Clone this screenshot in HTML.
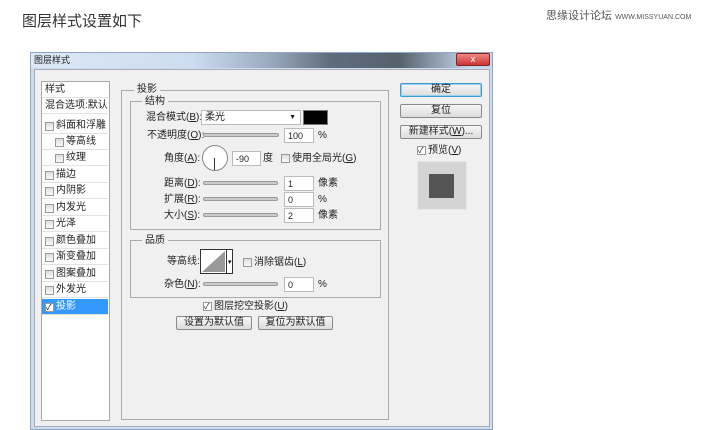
<!DOCTYPE html>
<html><head><meta charset="utf-8"><style>
*{margin:0;padding:0;box-sizing:border-box}
body{width:720px;height:430px;background:#fff;position:relative;overflow:hidden;font-family:"Liberation Sans","Noto Sans CJK SC",sans-serif;font-size:10px;color:#222}
.a{position:absolute;white-space:nowrap;line-height:13px}
.cb{position:absolute;width:9px;height:9px;border:1px solid #999;background:linear-gradient(#ddd,#fafafa)}
.in{position:absolute;height:15px;background:#fff;border:1px solid #bbb;font-size:9px;padding:1px 3px;line-height:12px}
.sl{position:absolute;height:4px;border:1px solid #999;background:#ccc;border-radius:2px}
.btn{position:absolute;height:14px;border:1px solid #8a8a8a;border-radius:2px;background:linear-gradient(#f6f6f6,#dcdcdc);text-align:center;font-size:10px;line-height:12px}
.li{position:absolute;left:42px;width:66px;height:16px;font-size:10px;line-height:16px;padding-left:14px;border-bottom:1px solid #e2e2e2}
</style></head><body>
<div class="a" style="left:22px;top:13px;font-size:15px;line-height:18px;color:#333">图层样式设置如下</div>
<div class="a" style="left:546px;top:10px;font-size:11px;color:#555">思缘设计论坛 <span style="font-size:7px">WWW.MISSYUAN.COM</span></div>
<div class="a" style="left:30px;top:52px;width:463px;height:378px;background:#cddcee;border:1px solid #8fa7c2"></div>
<div class="a" style="left:31px;top:53px;width:461px;height:15px;background:linear-gradient(90deg,#dce8f5 0%,#cddcf0 35%,#9aaabe 52%,#5f6c7c 65%,#56616e 80%,#c4d6ea 95%)"></div>
<div class="a" style="left:34px;top:54px;font-size:9px">图层样式</div>
<div class="a" style="left:456px;top:53px;width:34px;height:13px;background:linear-gradient(#e88,#c33);border:1px solid #822;border-radius:2px;color:#fff;font-size:9px;text-align:center;line-height:11px">x</div>
<div class="a" style="left:34px;top:69px;width:456px;height:358px;background:#f0f0f0;border:1px solid #aab"></div>
<div class="a" style="left:41px;top:81px;width:69px;height:340px;background:#fff;border:1px solid #aaa"></div>
<div class="li" style="top:82px;padding-left:3px">样式</div>
<div class="li" style="top:98px;padding-left:3px">混合选项:默认</div>
<div class="li" style="top:118px">斜面和浮雕</div><div class="cb" style="left:45px;top:122px"></div>
<div class="li" style="top:134px;padding-left:24px">等高线</div><div class="cb" style="left:55px;top:138px"></div>
<div class="li" style="top:150px;padding-left:24px">纹理</div><div class="cb" style="left:55px;top:154px"></div>
<div class="li" style="top:167px">描边</div><div class="cb" style="left:45px;top:171px"></div>
<div class="li" style="top:183px">内阴影</div><div class="cb" style="left:45px;top:187px"></div>
<div class="li" style="top:200px">内发光</div><div class="cb" style="left:45px;top:204px"></div>
<div class="li" style="top:216px">光泽</div><div class="cb" style="left:45px;top:220px"></div>
<div class="li" style="top:233px">颜色叠加</div><div class="cb" style="left:45px;top:237px"></div>
<div class="li" style="top:249px">渐变叠加</div><div class="cb" style="left:45px;top:253px"></div>
<div class="li" style="top:266px">图案叠加</div><div class="cb" style="left:45px;top:270px"></div>
<div class="li" style="top:282px">外发光</div><div class="cb" style="left:45px;top:286px"></div>
<div class="li" style="top:299px;background:#3399ff;color:#fff">投影</div><div class="cb" style="left:45px;top:303px;background:#fff;font-size:8px;line-height:7px;color:#000">✓</div>
<div class="a" style="left:121px;top:90px;width:268px;height:330px;border:1px solid #aaa"></div>
<div class="a" style="left:134px;top:83px;background:#f0f0f0;padding:0 3px">投影</div>
<div class="a" style="left:130px;top:101px;width:251px;height:129px;border:1px solid #aaa"></div>
<div class="a" style="left:142px;top:95px;background:#f0f0f0;padding:0 3px">结构</div>
<div class="a" style="left:146px;top:111px">混合模式(<u>B</u>):</div>
<div class="in" style="left:201px;top:110px;width:100px;font-size:10px">柔光<span style="position:absolute;right:4px;top:1px;font-size:7px">▼</span></div>
<div class="a" style="left:303px;top:110px;width:25px;height:15px;background:#000;border:1px solid #777"></div>
<div class="a" style="left:147px;top:129px">不透明度(<u>O</u>):</div>
<div class="sl" style="left:203px;top:133px;width:76px"></div>
<div class="in" style="left:284px;top:128px;width:30px">100</div><div class="a" style="left:318px;top:129px">%</div>
<div class="a" style="left:164px;top:152px">角度(<u>A</u>):</div>
<div class="a" style="left:202px;top:145px;width:26px;height:26px;border-radius:50%;border:1px solid #888;background:#fff"></div>
<div class="a" style="left:214px;top:158px;width:1px;height:12px;background:#333"></div>
<div class="in" style="left:232px;top:151px;width:29px">-90</div><div class="a" style="left:263px;top:152px">度</div>
<div class="cb" style="left:281px;top:154px"></div><div class="a" style="left:292px;top:152px">使用全局光(<u>G</u>)</div>
<div class="a" style="left:164px;top:177px">距离(<u>D</u>):</div>
<div class="sl" style="left:203px;top:181px;width:75px"></div>
<div class="in" style="left:284px;top:176px;width:30px">1</div><div class="a" style="left:318px;top:177px">像素</div>
<div class="a" style="left:164px;top:193px">扩展(<u>R</u>):</div>
<div class="sl" style="left:203px;top:197px;width:75px"></div>
<div class="in" style="left:284px;top:192px;width:30px">0</div><div class="a" style="left:318px;top:193px">%</div>
<div class="a" style="left:164px;top:209px">大小(<u>S</u>):</div>
<div class="sl" style="left:203px;top:213px;width:75px"></div>
<div class="in" style="left:284px;top:208px;width:30px">2</div><div class="a" style="left:318px;top:209px">像素</div>
<div class="a" style="left:130px;top:240px;width:251px;height:58px;border:1px solid #aaa"></div>
<div class="a" style="left:142px;top:234px;background:#f0f0f0;padding:0 3px">品质</div>
<div class="a" style="left:167px;top:255px">等高线:</div>
<svg class="a" style="left:200px;top:249px" width="33" height="25"><rect x="0.5" y="0.5" width="26" height="24" fill="#fff" stroke="#333"/><polygon points="2,23 25,2 25,23" fill="#999"/><rect x="26.5" y="0.5" width="6" height="24" fill="#fff" stroke="#333"/><text x="28" y="15" font-size="7">▾</text></svg>
<div class="cb" style="left:243px;top:258px"></div><div class="a" style="left:254px;top:256px">消除锯齿(<u>L</u>)</div>
<div class="a" style="left:164px;top:278px">杂色(<u>N</u>):</div>
<div class="sl" style="left:203px;top:282px;width:75px"></div>
<div class="in" style="left:284px;top:277px;width:30px">0</div><div class="a" style="left:318px;top:278px">%</div>
<div class="cb" style="left:203px;top:302px;background:#fff;font-size:8px;line-height:7px">✓</div><div class="a" style="left:214px;top:300px">图层挖空投影(<u>U</u>)</div>
<div class="btn" style="left:176px;top:316px;width:76px">设置为默认值</div>
<div class="btn" style="left:258px;top:316px;width:75px">复位为默认值</div>
<div class="btn" style="left:400px;top:83px;width:82px;border-color:#3c9ad6;box-shadow:0 0 0 1px #9cd0f0 inset">确定</div>
<div class="btn" style="left:400px;top:104px;width:82px">复位</div>
<div class="btn" style="left:400px;top:125px;width:82px">新建样式(<u>W</u>)...</div>
<div class="cb" style="left:417px;top:146px;background:#fff;font-size:8px;line-height:7px">✓</div><div class="a" style="left:428px;top:144px">预览(<u>V</u>)</div>
<div class="a" style="left:417px;top:161px;width:50px;height:49px;background:#d4d4d4;border:1px solid #e8e8e8"></div>
<div class="a" style="left:429px;top:174px;width:25px;height:24px;background:#555"></div>
</body></html>
